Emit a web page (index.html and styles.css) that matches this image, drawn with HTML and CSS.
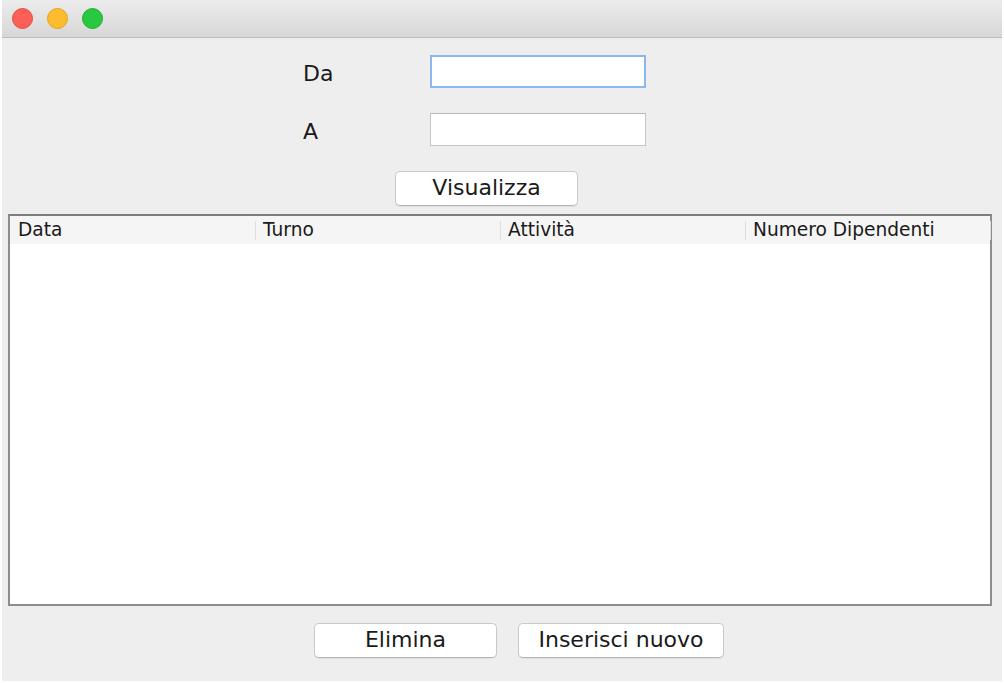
FILE: index.html
```html
<!DOCTYPE html>
<html lang="it">
<head>
<meta charset="utf-8">
<title>Turni</title>
<link rel="stylesheet" href="styles.css">
</head>
<body>
<div class="window">
  <div class="titlebar">
    <span class="light red"></span>
    <span class="light yellow"></span>
    <span class="light green"></span>
  </div>
  <div class="content">
    <div class="form">
      <label class="label">Da</label>
      <div class="input focused"></div>
      <label class="label">A</label>
      <div class="input"></div>
    </div>
    <div class="action-row">
      <button class="btn btn-vis">Visualizza</button>
    </div>
    <div class="table">
      <div class="thead">
        <div class="th">Data</div>
        <div class="th">Turno</div>
        <div class="th">Attività</div>
        <div class="th">Numero Dipendenti</div>
      </div>
      <div class="tbody"></div>
    </div>
    <div class="bottom-row">
      <button class="btn btn-del">Elimina</button>
      <button class="btn btn-new">Inserisci nuovo</button>
    </div>
  </div>
</div>
</body>
</html>
```
FILE: styles.css
```css
* { box-sizing: border-box; }
html, body { margin: 0; padding: 0; background: #ffffff; }
body {
  width: 1004px;
  height: 683px;
  overflow: hidden;
  font-family: "DejaVu Sans", "Liberation Sans", sans-serif;
  color: #1a1a1a;
}
.window {
  margin: 0 2px;
  width: 1000px;
  height: 681px;
  background: #eeeeee;
  display: flex;
  flex-direction: column;
}
.titlebar {
  height: 38px;
  flex: none;
  background: linear-gradient(#ececec, #d7d7d7);
  border-bottom: 1px solid #bcbcbc;
  display: flex;
  align-items: center;
  gap: 14px;
  padding: 0 0 1px 10px;
}
.light {
  width: 21px;
  height: 21px;
  border-radius: 50%;
  display: block;
}
.red { background: #fc5f57; border: 1px solid #e5493f; }
.yellow { background: #fdbc2e; border: 1px solid #e3a21a; }
.green { background: #28c840; border: 1px solid #1faa2f; }
.content {
  flex: 1;
  display: flex;
  flex-direction: column;
}
.form {
  display: grid;
  grid-template-columns: 127px 216px;
  grid-auto-rows: 33px;
  row-gap: 25px;
  margin: 17px 0 0 301px;
}
.label {
  font-size: 22px;
  line-height: 33px;
  padding-top: 2px;
}
.input {
  background: #ffffff;
  border: 1px solid #c6c6c6;
  border-top-color: #b9b9b9;
}
.input.focused {
  border: 2px solid #8cb8ee;
}
.action-row {
  margin: 25px 0 0 393px;
  display: flex;
}
.btn {
  font-family: "DejaVu Sans", "Liberation Sans", sans-serif;
  font-size: 22px;
  color: #1a1a1a;
  background: #ffffff;
  border: 1px solid #c9c9c9;
  border-bottom-color: #b4b4b4;
  border-radius: 5px;
  height: 35px;
  padding: 0 0 2px;
  line-height: 31px;
  box-shadow: 0 1px 1px rgba(0,0,0,0.06);
}
.btn-vis { width: 183px; }
.table {
  margin: 8px 0 0 6px;
  width: 984px;
  height: 392px;
  border: 2px solid #8d8d8d;
  border-top-color: #7e7e7e;
  background: #ffffff;
  display: flex;
  flex-direction: column;
}
.thead {
  height: 28px;
  background: #f5f5f5;
  display: flex;
  flex: none;
}
.th {
  width: 245px;
  font-size: 18.6px;
  padding-left: 8px;
  color: #1a1a1a;
  position: relative;
  margin: 4px 0 4px;
  line-height: 20px;
}
.th::after {
  content: "";
  position: absolute;
  top: 1px;
  bottom: 0;
  right: -1px;
  width: 1px;
  background: #dedede;
}
.tbody { flex: 1; background: #ffffff; }
.bottom-row {
  margin: 17px 0 0 312px;
  display: flex;
  gap: 21px;
}
.btn-del { width: 183px; }
.btn-new { width: 206px; }
```
